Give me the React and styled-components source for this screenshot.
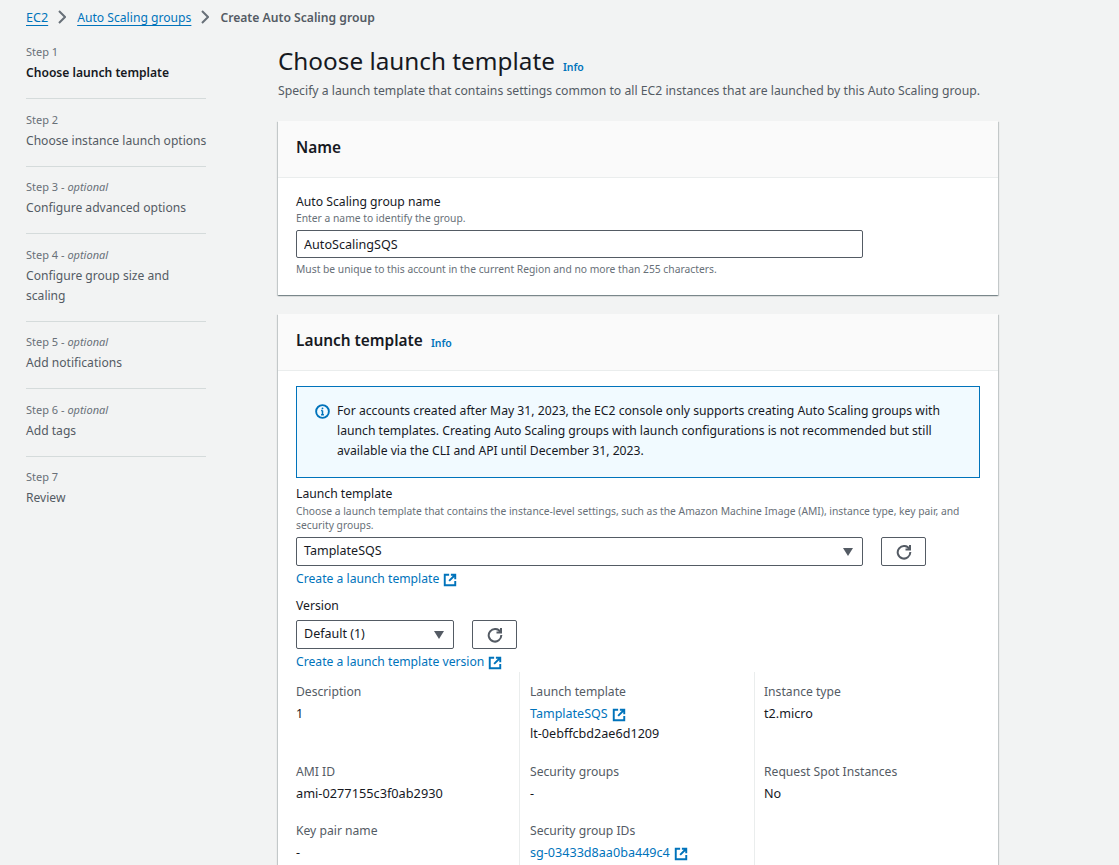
import React from "react";
import styled, { createGlobalStyle } from "styled-components";

const GlobalStyle = createGlobalStyle`
  html, body {
    margin: 0;
    padding: 0;
    background: #f2f3f3;
    color: #16191f;
    font-family: "Noto Sans", "Open Sans", sans-serif;
    font-size: 13px;
  }
  * { box-sizing: border-box; }
`;

const Page = styled.div`
  width: 1119px;
  height: 865px;
  overflow: hidden;
`;
const Breadcrumbs = styled.nav`
  display: flex;
  align-items: center;
  height: 34px;
  padding-left: 26px;
  font-size: 12.15px;
`;
const Crumb = styled.a`
  color: #0073bb;
  font-size: ${(p) => p.$size || 12.15}px;
  text-decoration: underline;
  text-underline-offset: 3px;
`;
const CrumbCurrent = styled.span`
  color: #545b64;
  font-weight: 600;
  font-size: 12.15px;
`;
const CrumbArrow = styled.svg`
  width: 8px;
  height: 14px;
  margin: 0 11px 0 10px;
  fill: none;
  stroke: #687078;
  stroke-width: 2;
`;
const Body = styled.div`
  display: flex;
  align-items: flex-start;
`;
const StepNav = styled.ol`
  list-style: none;
  margin: 8px 0 0 26px;
  padding: 0;
  width: 180px;
  flex: none;
`;
const StepItem = styled.li`
  padding: 0 0 15px;
  margin-bottom: 10.5px;
  border-bottom: ${(p) => (p.$last ? "none" : "1px solid #d5dbdb")};
`;
const StepLabel = styled.div`
  font-size: 11px;
  line-height: 20px;
  color: #687078;
  em { font-style: italic; }
`;
const StepName = styled.div`
  padding-top: 1px;
  font-size: 12.1px;
  line-height: 20px;
  color: ${(p) => (p.$active ? "#16191f" : "#545b64")};
  font-weight: ${(p) => (p.$active ? 600 : 400)};
  white-space: ${(p) => (p.$nowrap ? "nowrap" : "normal")};
`;
const Main = styled.main`
  margin-left: 72px;
  width: 720px;
  flex: none;
`;
const TitleRow = styled.div`
  display: flex;
  align-items: center;
  gap: 8px;
  height: 38px;
  margin-top: 8px;
`;
const Title = styled.h1`
  margin: 0;
  font-size: 24.3px;
  line-height: 38px;
  font-weight: 400;
`;
const InfoLink = styled.a`
  color: #0073bb;
  font-size: 10.5px;
  font-weight: 600;
  position: relative;
  top: ${(p) => p.$top || 0}px;
`;
const Subtitle = styled.p`
  margin: 1px 0 20px;
  font-size: 12.23px;
  line-height: 20px;
  color: #545b64;
  white-space: nowrap;
`;
const Card = styled.section`
  background: #fff;
  margin-bottom: 19px;
  box-shadow: 0 1px 1px 0 rgba(0, 28, 36, 0.3), 1px 1px 1px 0 rgba(0, 28, 36, 0.15),
    -1px 1px 1px 0 rgba(0, 28, 36, 0.15);
`;
const CardHeader = styled.header`
  display: flex;
  align-items: center;
  gap: 8px;
  height: 57px;
  padding: 0 18px 3px;
  background: #fafafa;
  border-bottom: 1px solid #eaeded;
`;
const CardTitle = styled.h2`
  margin: 0;
  font-size: 15.4px;
  font-weight: 600;
`;
const CardContent = styled.div`
  padding: ${(p) => p.$pad || "14px 18px 19px"};
`;
const FieldLabel = styled.div`
  font-size: 12.2px;
  line-height: ${(p) => p.$line || 19}px;
`;
const Hint = styled.div`
  font-size: 10.3px;
  line-height: 14px;
  color: #687078;
`;
const TextInput = styled.input`
  display: block;
  width: 567px;
  height: 28px;
  margin: 5px 0 4px;
  padding: 0 7px;
  border: 1px solid #545b64;
  border-radius: 2px;
  font: inherit;
  font-size: 12.6px;
  color: #16191f;
  outline: none;
`;
const Alert = styled.div`
  display: flex;
  gap: 7px;
  height: 92px;
  padding: 14px 18px;
  background: #f1faff;
  border: 1px solid #0073bb;
  margin-bottom: 5px;
  font-size: 12.2px;
  line-height: 20px;
`;
const AlertIcon = styled.svg`
  flex: none;
  width: 15px;
  height: 15px;
  margin-top: 3px;
`;
const ControlRow = styled.div`
  display: flex;
  gap: 18px;
  margin-top: ${(p) => p.$top || 5}px;
`;
const Select = styled.div`
  position: relative;
  display: flex;
  align-items: center;
  width: ${(p) => p.$width}px;
  height: 29px;
  padding: 0 7px 2px;
  border: 1px solid #545b64;
  border-radius: 2px;
  font-size: 12.5px;
`;
const Caret = styled.span`
  position: absolute;
  right: 9px;
  top: 10px;
  width: 0;
  height: 0;
  border-left: 5px solid transparent;
  border-right: 5px solid transparent;
  border-top: 8px solid #545b64;
`;
const IconButton = styled.button`
  display: flex;
  align-items: center;
  justify-content: center;
  width: 45px;
  height: 29px;
  padding: 0;
  background: #fff;
  border: 1px solid #545b64;
  border-radius: 2px;
`;
const RefreshIcon = styled.svg`
  width: 16px;
  height: 16px;
  fill: none;
  stroke: #545b64;
  stroke-width: 2;
`;
const ExtLink = styled.a`
  display: inline-flex;
  align-items: center;
  gap: 4px;
  color: #0073bb;
  font-size: ${(p) => p.$size || 12.17}px;
  line-height: 20px;
`;
const LinkRow = styled.div`
  margin-top: 3px;
  height: 20px;
`;
const VersionLabel = styled(FieldLabel)`
  margin-top: 7px;
`;
const ExtIcon = styled.svg`
  width: 14px;
  height: 14px;
  fill: none;
  stroke: #0073bb;
  stroke-width: 2.2;
  margin-top: 2px;
`;
const Details = styled.div`
  display: grid;
  grid-template-columns: 223px 235px 226px;
`;
const DetailColumn = styled.div`
  padding: 10px 0 0 ${(p) => (p.$left === undefined ? 10 : p.$left)}px;
  border-left: ${(p) => (p.$left === 0 ? "none" : "1px solid #eaeded")};
`;
const DetailItem = styled.div`
  height: ${(p) => p.$height}px;
`;
const DetailLabel = styled.div`
  font-size: 12.15px;
  line-height: 20px;
  color: #545b64;
`;
const DetailValue = styled.div`
  font-size: 12.6px;
  line-height: 20px;
  margin-top: ${(p) => (p.$flush ? 0 : 2)}px;
`;
const AmiValue = styled(DetailValue)`
  margin-top: 1px;
  font-size: 12.75px;
`;

const External = () => (
  <ExtIcon viewBox="0 0 16 16">
    <path d="M7 2H2v12h12V9" />
    <path d="M9 2h5v5M14 2 7 9" />
  </ExtIcon>
);

const Refresh = () => (
  <RefreshIcon viewBox="0 0 16 16">
    <path d="M13.5 5.2A6.3 6.3 0 1 0 14.3 8" />
    <path d="M14 1v4.5H9.5" />
  </RefreshIcon>
);

const steps = [
  { label: "Step 1", name: "Choose launch template", active: true },
  { label: "Step 2", name: "Choose instance launch options", nowrap: true },
  { label: "Step 3", optional: true, name: "Configure advanced options" },
  { label: "Step 4", optional: true, name: "Configure group size and scaling" },
  { label: "Step 5", optional: true, name: "Add notifications" },
  { label: "Step 6", optional: true, name: "Add tags" },
  { label: "Step 7", name: "Review" },
];

export default function App() {
  return (
    <Page>
      <GlobalStyle />
      <Breadcrumbs>
        <Crumb $size={12.6}>EC2</Crumb>
        <CrumbArrow viewBox="0 0 8 14"><path d="M1 1l6 6-6 6" /></CrumbArrow>
        <Crumb>Auto Scaling groups</Crumb>
        <CrumbArrow viewBox="0 0 8 14"><path d="M1 1l6 6-6 6" /></CrumbArrow>
        <CrumbCurrent>Create Auto Scaling group</CrumbCurrent>
      </Breadcrumbs>
      <Body>
        <StepNav>
          {steps.map((s, i) => (
            <StepItem key={s.label} $last={i === steps.length - 1}>
              <StepLabel>
                {s.label}
                {s.optional && <> - <em>optional</em></>}
              </StepLabel>
              <StepName $active={s.active} $nowrap={s.nowrap}>{s.name}</StepName>
            </StepItem>
          ))}
        </StepNav>
        <Main>
          <TitleRow>
            <Title>Choose launch template</Title>
            <InfoLink $top={6}>Info</InfoLink>
          </TitleRow>
          <Subtitle>
            Specify a launch template that contains settings common to all EC2 instances that are launched by this Auto Scaling group.
          </Subtitle>
          <Card>
            <CardHeader>
              <CardTitle>Name</CardTitle>
            </CardHeader>
            <CardContent>
              <FieldLabel>Auto Scaling group name</FieldLabel>
              <Hint>Enter a name to identify the group.</Hint>
              <TextInput readOnly value="AutoScalingSQS" />
              <Hint>Must be unique to this account in the current Region and no more than 255 characters.</Hint>
            </CardContent>
          </Card>
          <Card>
            <CardHeader>
              <CardTitle>Launch template</CardTitle>
              <InfoLink $top={2}>Info</InfoLink>
            </CardHeader>
            <CardContent $pad="15px 18px 20px">
              <Alert>
                <AlertIcon viewBox="0 0 16 16">
                  <circle cx="8" cy="8" r="6.8" fill="none" stroke="#0073bb" strokeWidth="2" />
                  <path d="M8 7v4.5M6.5 11.5h3M6.5 7H8" fill="none" stroke="#0073bb" strokeWidth="1.6" />
                  <circle cx="8" cy="4.6" r="1" fill="#0073bb" />
                </AlertIcon>
                <div>
                  For accounts created after May 31, 2023, the EC2 console only supports creating Auto Scaling groups with launch templates. Creating Auto Scaling groups with launch configurations is not recommended but still available via the CLI and API until December 31, 2023.
                </div>
              </Alert>
              <FieldLabel $line={21}>Launch template</FieldLabel>
              <Hint>
                Choose a launch template that contains the instance-level settings, such as the Amazon Machine Image (AMI), instance type, key pair, and security groups.
              </Hint>
              <ControlRow>
                <Select $width={567}>TamplateSQS<Caret /></Select>
                <IconButton><Refresh /></IconButton>
              </ControlRow>
              <LinkRow><ExtLink>Create a launch template <External /></ExtLink></LinkRow>
              <VersionLabel $line={20}>Version</VersionLabel>
              <ControlRow $top={4}>
                <Select $width={158}>Default (1)<Caret /></Select>
                <IconButton><Refresh /></IconButton>
              </ControlRow>
              <LinkRow><ExtLink>Create a launch template version <External /></ExtLink></LinkRow>
              <Details>
                <DetailColumn $left={0}>
                  <DetailItem $height={80}>
                    <DetailLabel>Description</DetailLabel>
                    <DetailValue>1</DetailValue>
                  </DetailItem>
                  <DetailItem $height={59}>
                    <DetailLabel>AMI ID</DetailLabel>
                    <AmiValue>ami-0277155c3f0ab2930</AmiValue>
                  </DetailItem>
                  <DetailItem $height={50}>
                    <DetailLabel>Key pair name</DetailLabel>
                    <DetailValue>-</DetailValue>
                  </DetailItem>
                </DetailColumn>
                <DetailColumn>
                  <DetailItem $height={80}>
                    <DetailLabel>Launch template</DetailLabel>
                    <DetailValue>
                      <ExtLink $size={12.5}>TamplateSQS <External /></ExtLink>
                    </DetailValue>
                    <DetailValue $flush>lt-0ebffcbd2ae6d1209</DetailValue>
                  </DetailItem>
                  <DetailItem $height={59}>
                    <DetailLabel>Security groups</DetailLabel>
                    <DetailValue>-</DetailValue>
                  </DetailItem>
                  <DetailItem $height={50}>
                    <DetailLabel>Security group IDs</DetailLabel>
                    <DetailValue>
                      <ExtLink $size={12.6}>sg-03433d8aa0ba449c4 <External /></ExtLink>
                    </DetailValue>
                  </DetailItem>
                </DetailColumn>
                <DetailColumn $left={9}>
                  <DetailItem $height={80}>
                    <DetailLabel>Instance type</DetailLabel>
                    <DetailValue>t2.micro</DetailValue>
                  </DetailItem>
                  <DetailItem $height={59}>
                    <DetailLabel>Request Spot Instances</DetailLabel>
                    <DetailValue>No</DetailValue>
                  </DetailItem>
                </DetailColumn>
              </Details>
            </CardContent>
          </Card>
        </Main>
      </Body>
    </Page>
  );
}
